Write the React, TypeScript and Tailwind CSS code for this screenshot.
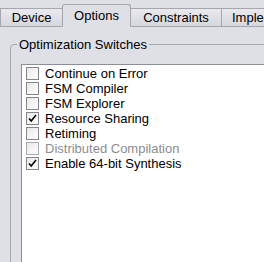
import React from "react"

type Switch = {
  label: string
  checked: boolean
  disabled?: boolean
}

const switches: Switch[] = [
  { label: "Continue on Error", checked: false },
  { label: "FSM Compiler", checked: false },
  { label: "FSM Explorer", checked: false },
  { label: "Resource Sharing", checked: true },
  { label: "Retiming", checked: false },
  { label: "Distributed Compilation", checked: false, disabled: true },
  { label: "Enable 64-bit Synthesis", checked: true },
]

const CheckBox = ({ checked, disabled }: { checked: boolean; disabled?: boolean }) => (
  <span
    className={`flex h-[13px] w-[13px] shrink-0 items-center justify-center border bg-gradient-to-br from-[#e8e8ea] to-white ${
      disabled ? "border-[#a8a8ae]" : "border-[#85858c]"
    }`}
  >
    {checked && (
      <svg width="9" height="9" viewBox="0 0 9 9">
        <path d="M1 4.5 L3.2 7 L8 1" fill="none" stroke="#000" strokeWidth="1.6" />
      </svg>
    )}
  </span>
)

const tabs = [
  { label: "Device", width: "w-[63px]", selected: false },
  { label: "Options", width: "w-[69px]", selected: true },
  { label: "Constraints", width: "w-[91px]", selected: false },
  { label: "Implementation", width: "w-[120px]", selected: false },
]

export default function App() {
  return (
    <div className="h-[262px] w-[264px] overflow-hidden bg-[#dfdfe6] font-['Liberation_Sans',Arial,sans-serif] text-[13px] text-black">
      {/* tab strip */}
      <div className="flex h-[27px] items-end border-b border-[#a6a6ae]">
        {tabs.map((t, i) => (
          <div
            key={t.label}
            className={`relative flex shrink-0 items-center justify-center overflow-hidden whitespace-nowrap border-t border-r border-[#a6a6ae] ${t.width} ${
              i === 0 ? "border-l" : ""
            } ${
              t.selected
                ? "z-10 mb-[-1px] h-[23px] rounded-t-[3px] border-l bg-[#dfdfe6] pb-[1px] ml-[-1px]"
                : "h-[18px] bg-gradient-to-b from-[#e9e9ee] to-[#d6d6de]"
            } ${t.label === "Implementation" ? "justify-start pl-[10px]" : ""}`}
          >
            {t.label}
          </div>
        ))}
      </div>

      {/* pane */}
      <div className="pt-[10px]">
        <fieldset className="ml-[10px] h-[240px] w-[300px] rounded-tl-[4px] border border-[#a6a6ae] pl-[10px] pt-[12px]">
          <legend className="ml-[-4px] px-[2px] leading-[15px]">Optimization Switches</legend>
          <div className="h-[220px] border-t border-l border-[#8e8e96] bg-white pl-[4px] pt-[1px]">
            {switches.map((s) => (
              <div key={s.label} className="flex h-[15px] items-center gap-[6px]">
                <CheckBox checked={s.checked} disabled={s.disabled} />
                <span className={`whitespace-nowrap leading-[15px] ${s.disabled ? "text-[#8c8c90]" : ""}`}>
                  {s.label}
                </span>
              </div>
            ))}
          </div>
        </fieldset>
      </div>
    </div>
  )
}
